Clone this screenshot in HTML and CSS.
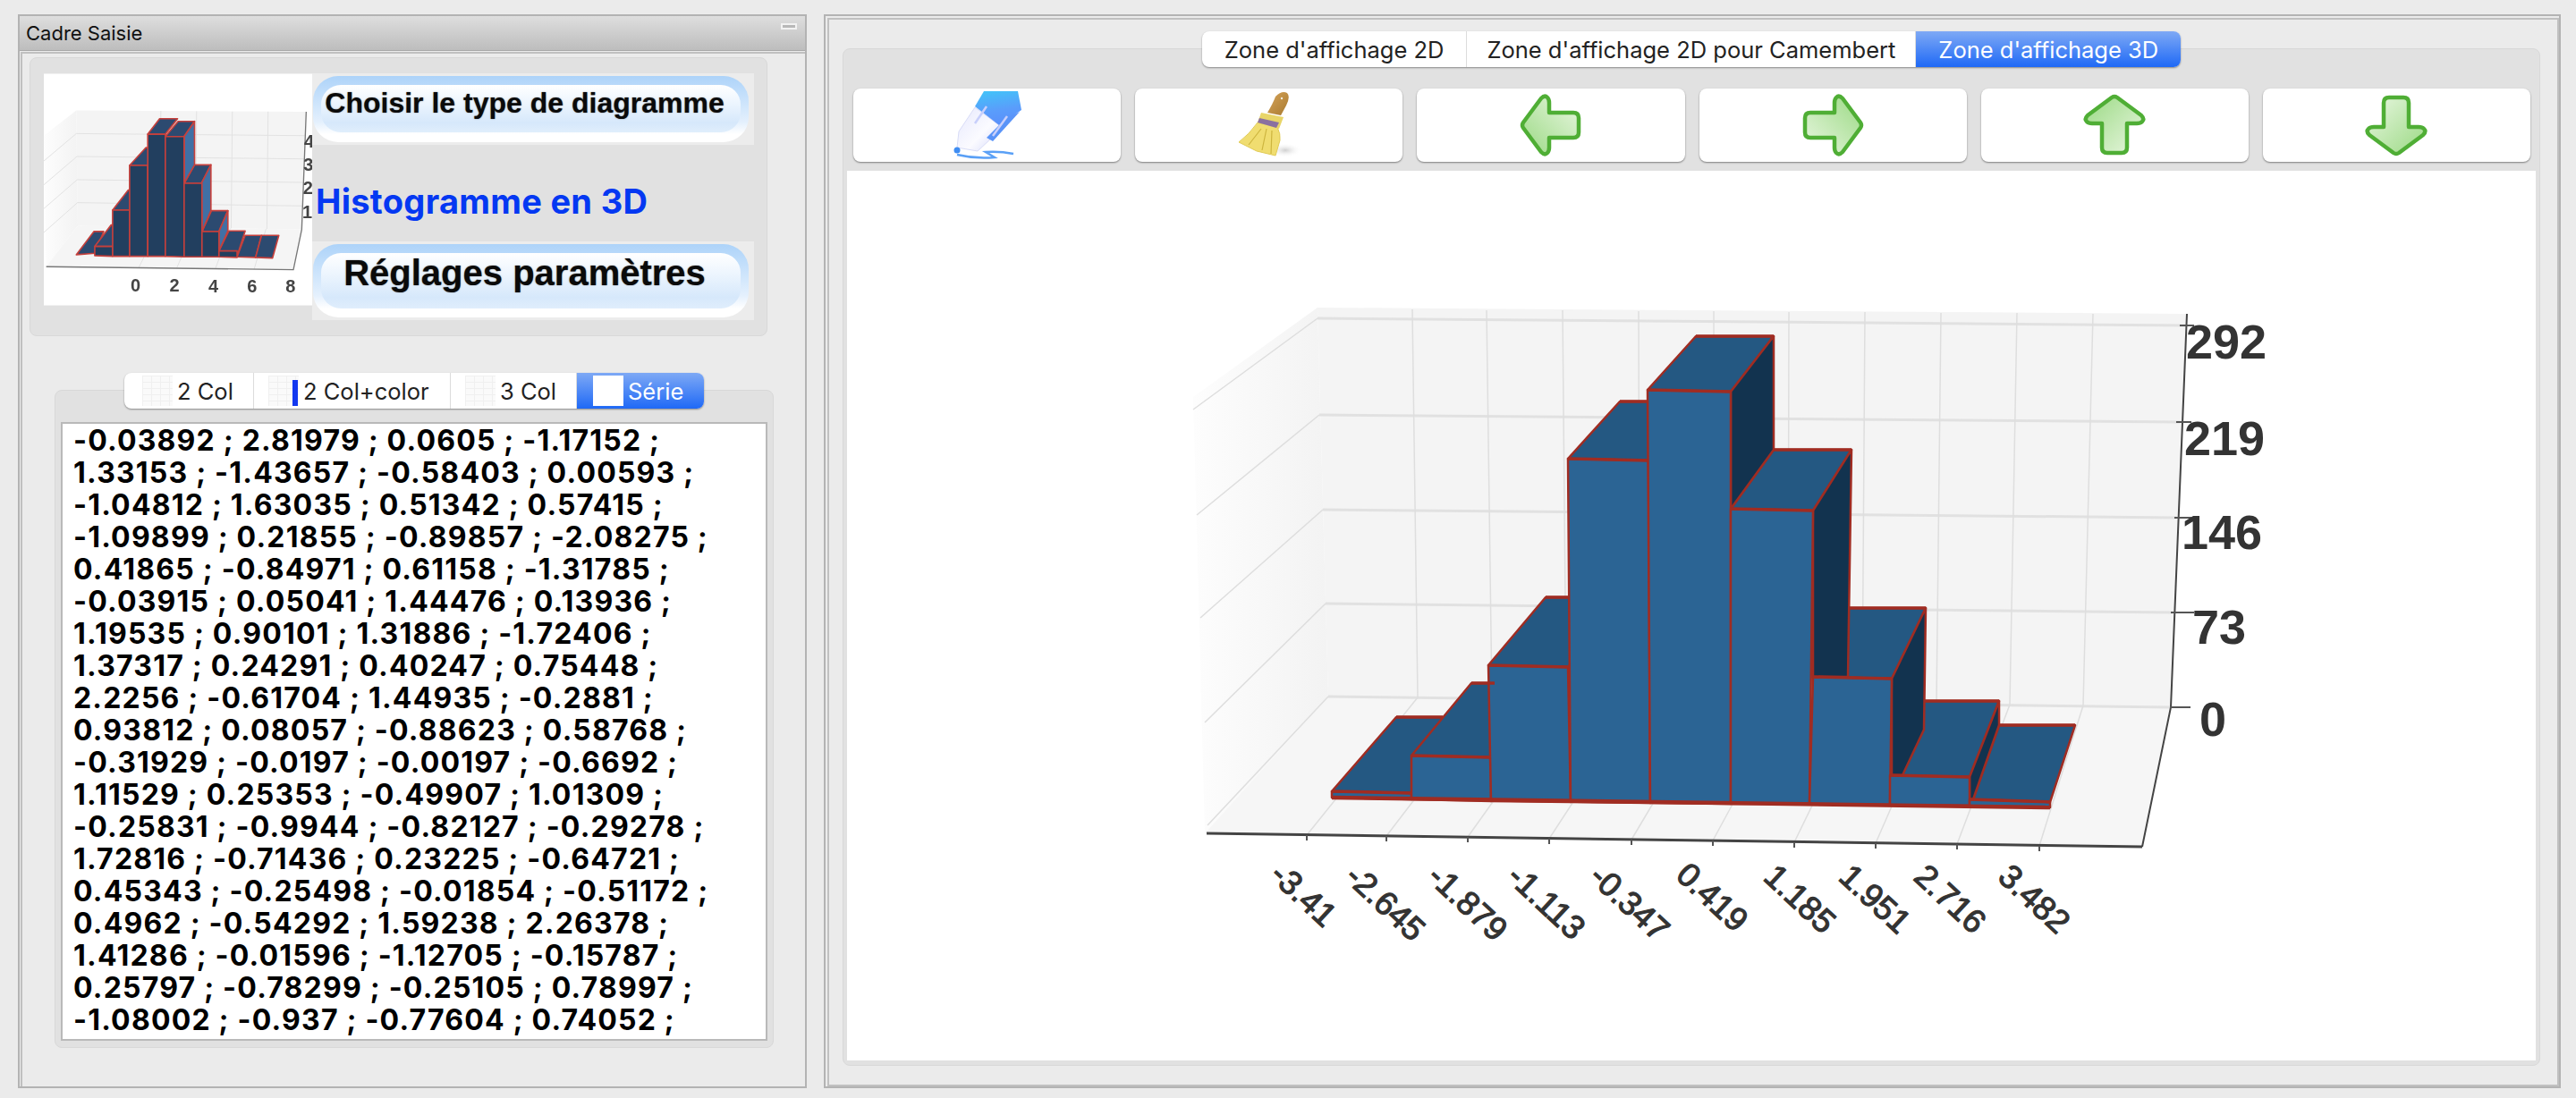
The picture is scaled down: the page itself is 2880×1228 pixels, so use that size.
FILE: index.html
```html
<!DOCTYPE html>
<html lang="fr">
<head>
<meta charset="utf-8">
<title>Histogramme en 3D</title>
<link rel="stylesheet" href="styles.css">
</head>
<body>
<svg class="defs" width="0" height="0">
  <defs>
    <linearGradient id="gLeft" x1="0" y1="1" x2="1" y2="0"><stop offset="0" stop-color="#9ad983"/><stop offset="1" stop-color="#eaf7e2"/></linearGradient>
    <linearGradient id="gWall" x1="0" y1="0" x2="1" y2="0"><stop offset="0" stop-color="#fdfdfd"/><stop offset="1" stop-color="#f3f3f3"/></linearGradient>
    <linearGradient id="gBody" x1="0" y1="0" x2="1" y2="1"><stop offset="0" stop-color="#e6e8fd"/><stop offset=".6" stop-color="#fbfbff"/><stop offset="1" stop-color="#d5d9fa"/></linearGradient>
    <linearGradient id="gCap" x1="0.4" y1="0" x2="0.6" y2="1"><stop offset="0" stop-color="#44c0f9"/><stop offset=".55" stop-color="#5a9dfb"/><stop offset="1" stop-color="#5a8ffa"/></linearGradient>
    <linearGradient id="gHandle" x1="0" y1="0" x2="1" y2="1"><stop offset="0" stop-color="#d6a45a"/><stop offset="1" stop-color="#a87a30"/></linearGradient>
    <radialGradient id="gShade"><stop offset="0" stop-color="#cfcfcf"/><stop offset="1" stop-color="#ffffff" stop-opacity="0"/></radialGradient>
    <path id="arrow" d="M4 32 L24 5 Q28 1 31 4 Q33 6 33 10 V21 H60 Q66 21 66 27 V43 Q66 49 60 49 H33 V60 Q33 64 31 66 Q28 69 24 65 L4 38 Q2 35 4 32 Z"/>
  </defs>
</svg>
<main class="desktop">
  <section class="window window-left">
    <header class="titlebar"><span>Cadre Saisie</span><i class="minimize"></i></header>
    <div class="win-body">
      <div class="panel panel-type">
        <svg class="mini-chart" viewBox="54 37 901 778" width="300" height="260">
          <rect x="54" y="37" width="901" height="778" fill="#fff"/>
          <polygon points="163,160 935,165 920,560 168,548" fill="#f4f4f4"/>
          <polygon points="163,160 54,245 62,685 168,548" fill="url(#gWall)"/>
          <polygon points="168,548 920,560 892,695 62,685" fill="#f5f5f5"/>
          <g class="mini-grid">
            <path d="M163 238 L930 245 M165 315 L928 323 M166 393 L926 402 M167 470 L923 481"/>
            <path d="M163 238 L54 330 M165 315 L54 410 M166 393 L54 490 M167 470 L54 570"/>
            <path d="M447 162 L443 552 M567 163 L563 554 M687 164 L683 556 M807 164 L803 558"/>
            <path d="M440 552 L372 690 M560 554 L500 690 M680 556 L630 692 M800 558 L760 694"/>
          </g>
          <path class="mini-axis" d="M62 685 L892 695 L920 560 L935 165"/>
          <g class="mini-top">
            <polygon points="163,645 222,567 255,567 225,640"/>
            <polygon points="225,617 280,545 340,545 285,617"/>
            <polygon points="285,495 337,428 397,428 342,495"/>
            <polygon points="342,345 397,285 460,285 403,345"/>
            <polygon points="403,240 443,188 503,188 462,240"/>
            <polygon points="462,248 505,197 560,197 525,248"/>
            <polygon points="525,405 560,343 615,343 583,405"/>
            <polygon points="585,567 617,497 672,497 642,567"/>
            <polygon points="642,632 675,565 730,565 703,650"/>
            <polygon points="703,652 730,580 785,580 765,654"/>
            <polygon points="765,654 785,580 843,580 822,656"/>
          </g>
          <g class="mini-side">
            <polygon points="525,248 560,197 560,343 525,405"/>
            <polygon points="583,405 615,343 615,497 585,567"/>
            <polygon points="642,567 672,497 672,565 642,632"/>
          </g>
          <g class="mini-front">
            <polygon points="225,617 285,617 285,650 225,648"/>
            <polygon points="285,495 342,495 342,650 285,650"/>
            <polygon points="342,345 403,345 403,650 342,650"/>
            <polygon points="403,240 462,240 462,650 403,650"/>
            <polygon points="462,248 525,248 525,652 462,650"/>
            <polygon points="525,405 585,405 585,652 525,652"/>
            <polygon points="585,567 642,567 642,652 585,652"/>
            <polygon points="642,632 703,632 703,654 642,652"/>
          </g>
          <g class="mini-labels">
            <text x="362" y="768" text-anchor="middle">0</text>
            <text x="493" y="768" text-anchor="middle">2</text>
            <text x="623" y="770" text-anchor="middle">4</text>
            <text x="753" y="772" text-anchor="middle">6</text>
            <text x="882" y="772" text-anchor="middle">8</text>
            <text x="928" y="284">4</text>
            <text x="926" y="364">3</text>
            <text x="924" y="442">2</text>
            <text x="922" y="522">1</text>
          </g>
        </svg>
        <div class="type-col">
          <button class="glossy glossy-top"><span class="glossy-pill"><span class="glossy-inner">Choisir le type de diagramme</span></span></button>
          <div class="type-label">Histogramme en 3D</div>
          <button class="glossy glossy-bottom"><span class="glossy-pill"><span class="glossy-inner">Réglages paramètres</span></span></button>
        </div>
      </div>
      <div class="panel panel-data">
        <nav class="segments segments-small">
          <a class="seg seg-a"><i class="grid-icon"></i>2 Col</a>
          <a class="seg seg-b"><i class="grid-icon"><b></b></i>2 Col+color</a>
          <a class="seg seg-c"><i class="grid-icon"></i>3 Col</a>
          <a class="seg seg-d seg-on"><i class="white-icon"></i>Série</a>
        </nav>
        <div class="series">-0.03892 ; 2.81979 ; 0.0605 ; -1.17152 ;
1.33153 ; -1.43657 ; -0.58403 ; 0.00593 ;
-1.04812 ; 1.63035 ; 0.51342 ; 0.57415 ;
-1.09899 ; 0.21855 ; -0.89857 ; -2.08275 ;
0.41865 ; -0.84971 ; 0.61158 ; -1.31785 ;
-0.03915 ; 0.05041 ; 1.44476 ; 0.13936 ;
1.19535 ; 0.90101 ; 1.31886 ; -1.72406 ;
1.37317 ; 0.24291 ; 0.40247 ; 0.75448 ;
2.2256 ; -0.61704 ; 1.44935 ; -0.2881 ;
0.93812 ; 0.08057 ; -0.88623 ; 0.58768 ;
-0.31929 ; -0.0197 ; -0.00197 ; -0.6692 ;
1.11529 ; 0.25353 ; -0.49907 ; 1.01309 ;
-0.25831 ; -0.9944 ; -0.82127 ; -0.29278 ;
1.72816 ; -0.71436 ; 0.23225 ; -0.64721 ;
0.45343 ; -0.25498 ; -0.01854 ; -0.51172 ;
0.4962 ; -0.54292 ; 1.59238 ; 2.26378 ;
1.41286 ; -0.01596 ; -1.12705 ; -0.15787 ;
0.25797 ; -0.78299 ; -0.25105 ; 0.78997 ;
-1.08002 ; -0.937 ; -0.77604 ; 0.74052 ;</div>
      </div>
    </div>
  </section>

  <section class="window window-right">
    <div class="win-body win-body-right">
      <div class="panel panel-view">
        <nav class="segments segments-large">
          <a class="seg">Zone d'affichage 2D</a>
          <a class="seg">Zone d'affichage 2D pour Camembert</a>
          <a class="seg seg-on">Zone d'affichage 3D</a>
        </nav>
        <div class="toolbar">
          <button class="tool">
            <svg class="icon-soft" viewBox="0 0 76 76" width="76" height="76">
              <path d="M4 71 Q25 76 46 74 L36 68 Q52 67 67 70" fill="none" stroke="#5aa0f6" stroke-width="2.5"/>
              <polygon points="24,18 51,38 42,53 27,67 4,63 6,45" fill="url(#gBody)" stroke="#d8dcf6"/>
              <polygon points="34,0 72,0 76,21 51,38 24,17" fill="url(#gCap)"/>
              <polygon points="59,30 74,23 44,56 37,52" fill="#5a94f8"/>
              <path d="M37 17 L24 36 M60 28 L44 50" fill="none" stroke="#c8cffb" stroke-width="2.5"/>
              <circle cx="4" cy="66" r="3.5" fill="#3f8df2"/>
            </svg>
          </button>
          <button class="tool">
            <svg class="icon-soft" viewBox="0 0 72 76" width="72" height="76">
              <ellipse cx="54" cy="66" rx="18" ry="8" fill="url(#gShade)"/>
              <path d="M43 6 Q50 -1 56 2 Q60 6 55 16 L49 27 L34 24 Q40 14 43 6 Z" fill="url(#gHandle)"/>
              <circle cx="50" cy="8" r="1.2" fill="#f3efe4"/>
              <path d="M23 35 L45 40 Q49 48 48 55 L43 72 L22 67 L2 57 Q14 48 23 35 Z" fill="#f0dd70" stroke="#e0ca55"/>
              <path d="M33 42 L28 66 M39 44 L38 70 M27 42 L13 60" fill="none" stroke="#cdb53f" stroke-width="1.2"/>
              <polygon points="27,24 52,29 47,42 23,35" fill="#e8d568"/>
              <polygon points="25,30 47,35 44,41 23,35" fill="#8a70a0"/>
            </svg>
          </button>
          <button class="tool"><svg class="arrow" viewBox="0 0 70 70" width="70" height="70"><use href="#arrow" fill="url(#gLeft)"/></svg></button>
          <button class="tool"><svg class="arrow" viewBox="0 0 70 70" width="70" height="70"><use href="#arrow" transform="rotate(180 35 35)" fill="url(#gLeft)"/></svg></button>
          <button class="tool"><svg class="arrow" viewBox="0 0 70 70" width="70" height="70"><use href="#arrow" transform="rotate(90 35 35)" fill="url(#gLeft)"/></svg></button>
          <button class="tool"><svg class="arrow" viewBox="0 0 70 70" width="70" height="70"><use href="#arrow" transform="rotate(-90 35 35)" fill="url(#gLeft)"/></svg></button>
        </div>
        <div class="canvas">
          <svg class="chart" viewBox="946 190 1888 996" width="1888" height="996">
            <polygon points="1472,343 2444,350 2426,790 1484,778" fill="#f4f4f4"/>
            <polygon points="1472,343 1333,443 1346,931 1484,778" fill="url(#gWall)"/>
            <polygon points="1484,778 2426,790 2394,946 1346,931" fill="#f6f6f6"/>
            <g class="grid-h">
              <path d="M1472 355 L2444 363 M1474 463 L2436 471 M1478 569 L2432 578 M1481 674 L2428 684 M1484 778 L2425 790"/>
            </g>
            <g class="grid-v">
              <path d="M1472 355 L1333 457 M1474 463 L1337 575 M1478 569 L1341 690 M1481 674 L1346 807 M1484 778 L1349 922"/>
              <path d="M1578 345 L1584 779 M1661 346 L1667 780 M1746 346 L1750 781 M1831 347 L1832 782 M1915 347 L1915 783 M1999 348 L1998 784 M2084 348 L2081 785 M2169 349 L2164 786 M2254 349 L2246 787 M2339 350 L2328 788"/>
              <path d="M1584 779 L1460 933 M1667 780 L1549 934 M1750 781 L1640 935 M1832 782 L1731 937 M1915 783 L1823 938 M1998 784 L1914 939 M2081 785 L2005 941 M2164 786 L2096 942 M2246 787 L2187 943 M2328 788 L2279 945"/>
            </g>
            <path class="axis-front" d="M1348 931 L2394 946"/>
            <path class="axis-y" d="M2444 350 L2426 790 L2394 946"/>
            <path class="axis-tick" d="M2436 363 H2452 M2432 471 H2449 M2430 578 H2449 M2426 684 H2452 M2425 790 H2448 M1460 933 V939 M1549 934 V940 M1640 935 V941 M1731 937 V943 M1823 938 V944 M1914 939 V945 M2005 941 V947 M2096 942 V948 M2187 943 V949 M2279 945 V951"/>
            <g class="bars bar-top">
              <polygon points="1488,884 1560,801 1612,801 1577,886"/>
              <polygon points="1577,844 1644,763 1730,763 1666,846"/>
              <polygon points="1663,743 1727,667 1815,667 1752,745"/>
              <polygon points="1752,512 1810,448 1900,448 1842,514"/>
              <polygon points="1841,435 1895,375 1982,375 1934,437"/>
              <polygon points="1934,568 1982,502 2069,502 2026,570"/>
              <polygon points="2026,756 2067,679 2152,679 2114,758"/>
              <polygon points="2112,866 2150,783 2234,783 2201,868"/>
              <polygon points="2205,893 2234,810 2319,810 2291,896"/>
            </g>
            <g class="bars bar-side">
              <polygon points="1934,437 1982,375 1982,502 1934,568"/>
              <polygon points="2026,570 2069,502 2065,756 2026,756"/>
              <polygon points="2114,758 2152,679 2150,815 2126,866 2114,866"/>
              <polygon points="2201,868 2234,783 2234,810 2205,893 2201,893"/>
            </g>
            <g class="bars bar-front">
              <polygon points="1488,884 1577,886 1577,893 1488,891"/>
              <polygon points="1577,844 1666,846 1666,895 1577,893"/>
              <polygon points="1663,743 1752,745 1755,896 1666,895"/>
              <polygon points="1752,512 1842,514 1844,897 1755,896"/>
              <polygon points="1841,435 1934,437 1934,898 1844,897"/>
              <polygon points="1934,568 2026,570 2022,898 1934,898"/>
              <polygon points="2026,756 2114,758 2112,899 2022,898"/>
              <polygon points="2112,866 2201,868 2201,900 2112,899"/>
              <polygon points="2201,893 2291,896 2291,902 2201,900"/>
            </g>
            <path class="bar-base" d="M1488 891 L2291 902"/>
            <g class="bars-top-edge">
              <path d="M1560 801 H1612 M1644 763 H1670 M1727 667 H1752 M1810 448 H1842 M1895 375 H1982 M1982 502 H2069 M2067 679 H2152 M2150 783 H2234 M2234 810 H2319 M1577 844 L1666 846 M1663 743 L1752 745 M1752 512 L1842 514 M1841 435 L1934 437 M1934 568 L2026 570 M2026 756 L2114 758 M2112 866 L2201 868 M2201 893 L2291 896 M1488 884 L1577 886"/>
            </g>
            <g class="y-labels">
              <text x="2443" y="400">292</text>
              <text x="2441" y="508">219</text>
              <text x="2438" y="613">146</text>
              <text x="2450" y="719">73</text>
              <text x="2458" y="822">0</text>
            </g>
            <g class="x-labels">
              <text transform="translate(1417 980) rotate(43)">-3.41</text>
              <text transform="translate(1501 982) rotate(43)">-2.645</text>
              <text transform="translate(1593 982) rotate(43)">-1.879</text>
              <text transform="translate(1682 982) rotate(43)">-1.113</text>
              <text transform="translate(1774 982) rotate(43)">-0.347</text>
              <text transform="translate(1871 980) rotate(43)">0.419</text>
              <text transform="translate(1969 982) rotate(43)">1.185</text>
              <text transform="translate(2053 982) rotate(43)">1.951</text>
              <text transform="translate(2137 982) rotate(43)">2.716</text>
              <text transform="translate(2231 982) rotate(43)">3.482</text>
            </g>
          </svg>
        </div>
      </div>
    </div>
  </section>
</main>
</body>
</html>
```
FILE: styles.css
```css
* { box-sizing: border-box; }
html, body { margin: 0; height: 100%; }
body {
  background: #ebebeb;
  font-family: Inter, "Liberation Sans", Arial, sans-serif;
  color: #222;
  overflow: hidden;
}
.defs { display: block; height: 0; }
.desktop {
  display: flex;
  gap: 19px;
  width: 2880px;
  height: 1228px;
  padding: 16px 21px 11px 20px;
}

/* windows */
.window {
  display: flex;
  flex-direction: column;
  border: 2px solid #b3b3b3;
  background: #ebebeb;
}
.window-left { width: 882px; flex: none; }
.window-right { flex: 1; padding: 2px 0 0 2px; }
.titlebar {
  display: flex;
  align-items: center;
  justify-content: space-between;
  height: 39px;
  padding: 0 9px 0 7px;
  background: linear-gradient(#dedede, #bdbdbd);
  border-bottom: 1px solid #a9a9a9;
  font-size: 22px;
  color: #111;
  flex: none;
}
.minimize {
  display: block;
  width: 18px;
  height: 7px;
  border: 2px solid #f2f2f2;
  background: #b8b8b8;
  margin-top: -16px;
}
.win-body {
  flex: 1;
  display: flex;
  flex-direction: column;
  margin: 1px 0 0 1px;
  padding: 4px 0 0 8px;
  border: 2px solid #c0c0c0;
  border-right: none;
  border-bottom: none;
  min-height: 0;
}
.win-body-right {
  margin: 0;
  padding: 32px 19px 21px 15px;
  border: 2px solid #c0c0c0;
}

/* panels */
.panel {
  background: #e1e1e1;
  border: 1px solid #d8d8d8;
  border-radius: 8px;
}
.panel-type {
  display: flex;
  align-items: flex-start;
  width: 825px;
  height: 312px;
  padding: 17px 0 0 15px;
  flex: none;
}
.mini-chart { display: block; flex: none; filter: blur(.6px); }
.type-col {
  width: 494px;
  height: 276px;
  display: flex;
  flex-direction: column;
  flex: none;
}
.glossy {
  display: block;
  width: 100%;
  padding: 0;
  border: 0;
  background: #ececec;
  font-family: "Liberation Sans", Arial, sans-serif;
  color: #0a0a0a;
  font-weight: 700;
  text-shadow: 0 0 1.5px rgba(0,0,0,.55);
}
.glossy-top { height: 80px; font-size: 32px; }
.glossy-bottom { height: 88px; font-size: 40px; }
.glossy-pill {
  display: block;
  width: 487px;
  margin-left: 1px;
  padding: 10px 9px 0;
  border-radius: 28px;
  background: linear-gradient(#add3f9 0, #c5e0fb 30%, #e4f0fd 70%, #fff 88%);
}
.glossy-top .glossy-pill { height: 74px; }
.glossy-bottom .glossy-pill { height: 82px; }
.glossy-inner {
  display: flex;
  align-items: center;
  justify-content: center;
  white-space: nowrap;
  border-radius: 22px;
  background: linear-gradient(#ffffff 0, #eef6fe 35%, #d6e8fb 80%, #e0eefc 100%);
  padding-right: 14px;
}
.glossy-top .glossy-inner { height: 53px; padding-bottom: 12px; }
.glossy-bottom .glossy-inner { height: 62px; padding-bottom: 18px; }
.type-label {
  flex: 1;
  display: flex;
  align-items: center;
  padding: 18px 0 0 4px;
  font-size: 38px;
  letter-spacing: .3px;
  font-weight: 700;
  color: #0438f2;
  white-space: nowrap;
}
.panel-data {
  display: flex;
  flex-direction: column;
  align-items: center;
  width: 804px;
  height: 736px;
  margin: 60px 0 0 28px;
  padding: 0 6px 7px;
  flex: none;
}

/* segmented controls */
.segments {
  display: flex;
  margin-top: -20px;
  height: 40px;
  border-radius: 8px;
  background: #fff;
  box-shadow: 0 1px 2px rgba(0,0,0,.4);
  flex: none;
}
.seg {
  display: flex;
  align-items: center;
  font-size: 25.5px;
  color: #222;
  border-right: 1px solid #dcdcdc;
  white-space: nowrap;
}
.seg:first-child { border-radius: 8px 0 0 8px; }
.seg:last-child { border-radius: 0 8px 8px 0; border-right: 0; }
.seg-on {
  background: linear-gradient(#7ea9f5, #1f69f6);
  color: #fff;
}
.segments-small .seg { gap: 5px; }
.seg-a { width: 145px; padding-left: 20px; }
.seg-b { width: 220px; padding-left: 16px; }
.seg-c { width: 141px; padding-left: 16px; }
.seg-d { width: 142px; padding-left: 18px; }
.grid-icon, .white-icon {
  display: block;
  position: relative;
  width: 34px;
  height: 34px;
  flex: none;
}
.grid-icon {
  background-color: #fafafa;
  background-image:
    linear-gradient(#f0f0f0 1px, transparent 1px),
    linear-gradient(90deg, #f0f0f0 1px, transparent 1px);
  background-size: 34px 7px, 10px 34px;
}
.grid-icon b {
  position: absolute;
  right: 1px;
  bottom: 0;
  width: 6px;
  height: 29px;
  background: #1238f0;
}
.white-icon { background: #fff; }
.segments-large .seg { padding: 0 25px; }
.segments-large .seg:nth-child(2) { padding: 0 22px; }

/* series text */
.series {
  align-self: stretch;
  flex: 1;
  margin-top: 15px;
  padding: 1px 0 0 12px;
  background: #fff;
  border: 2px solid #b9b9b9;
  font-size: 32px;
  letter-spacing: 1.2px;
  font-weight: 700;
  line-height: 36px;
  color: #000;
  white-space: pre;
  overflow: hidden;
}

/* right side */
.panel-view {
  flex: 1;
  display: flex;
  flex-direction: column;
  align-items: center;
  padding: 0 4px 5px;
  min-height: 0;
}
.toolbar {
  align-self: stretch;
  display: flex;
  gap: 16px;
  margin: 24px 6px 10px 7px;
  flex: none;
}
.tool {
  flex: 1;
  height: 82px;
  padding: 0;
  display: flex;
  align-items: center;
  justify-content: center;
  background: #fff;
  border: 0;
  border-radius: 8px;
  box-shadow: 0 1px 2px rgba(0,0,0,.45);
}
.tool svg { display: block; }
.icon-soft { filter: blur(.5px); }
.arrow { fill: none; stroke: #4fae35; stroke-width: 4.5; stroke-linejoin: round; filter: blur(.4px); }
.canvas {
  align-self: stretch;
  flex: 1;
  background: #fff;
  min-height: 0;
}
.chart { display: block; }

/* chart styling */
.grid-h path { fill: none; stroke: #e1e1e1; stroke-width: 3; }
.grid-v path { fill: none; stroke: #dedede; stroke-width: 1.5; }
.axis-front { fill: none; stroke: #444; stroke-width: 3; }
.axis-y { fill: none; stroke: #444; stroke-width: 2; }
.axis-tick { fill: none; stroke: #555; stroke-width: 2; }
.bars polygon { stroke: #a02c22; stroke-width: 2.5; stroke-linejoin: round; }
.bar-top polygon { fill: #245882; }
.bar-side polygon { fill: #12334f; }
.bar-front polygon { fill: #2b6494; }
.bar-base { fill: none; stroke: #a02c22; stroke-width: 4.5; }
.bars-top-edge path { fill: none; stroke: #a02c22; stroke-width: 3.5; }
.y-labels text { font: 700 54px "Liberation Sans", Arial, sans-serif; fill: #333; }
.x-labels text { font: 400 37px "Liberation Sans", Arial, sans-serif; fill: #333; stroke: #333; stroke-width: 1.2; }

.mini-grid path { fill: none; stroke: #e2e2e2; stroke-width: 3; }
.mini-axis { fill: none; stroke: #777; stroke-width: 4; }
.mini-top polygon, .mini-front polygon, .mini-side polygon { stroke: #c5403c; stroke-width: 5; stroke-linejoin: round; }
.mini-top polygon { fill: #2c4a70; }
.mini-side polygon { fill: #4070a5; }
.mini-front polygon { fill: #223f5f; }
.mini-labels text { font: 700 60px "Liberation Sans", Arial, sans-serif; fill: #444; }
```
